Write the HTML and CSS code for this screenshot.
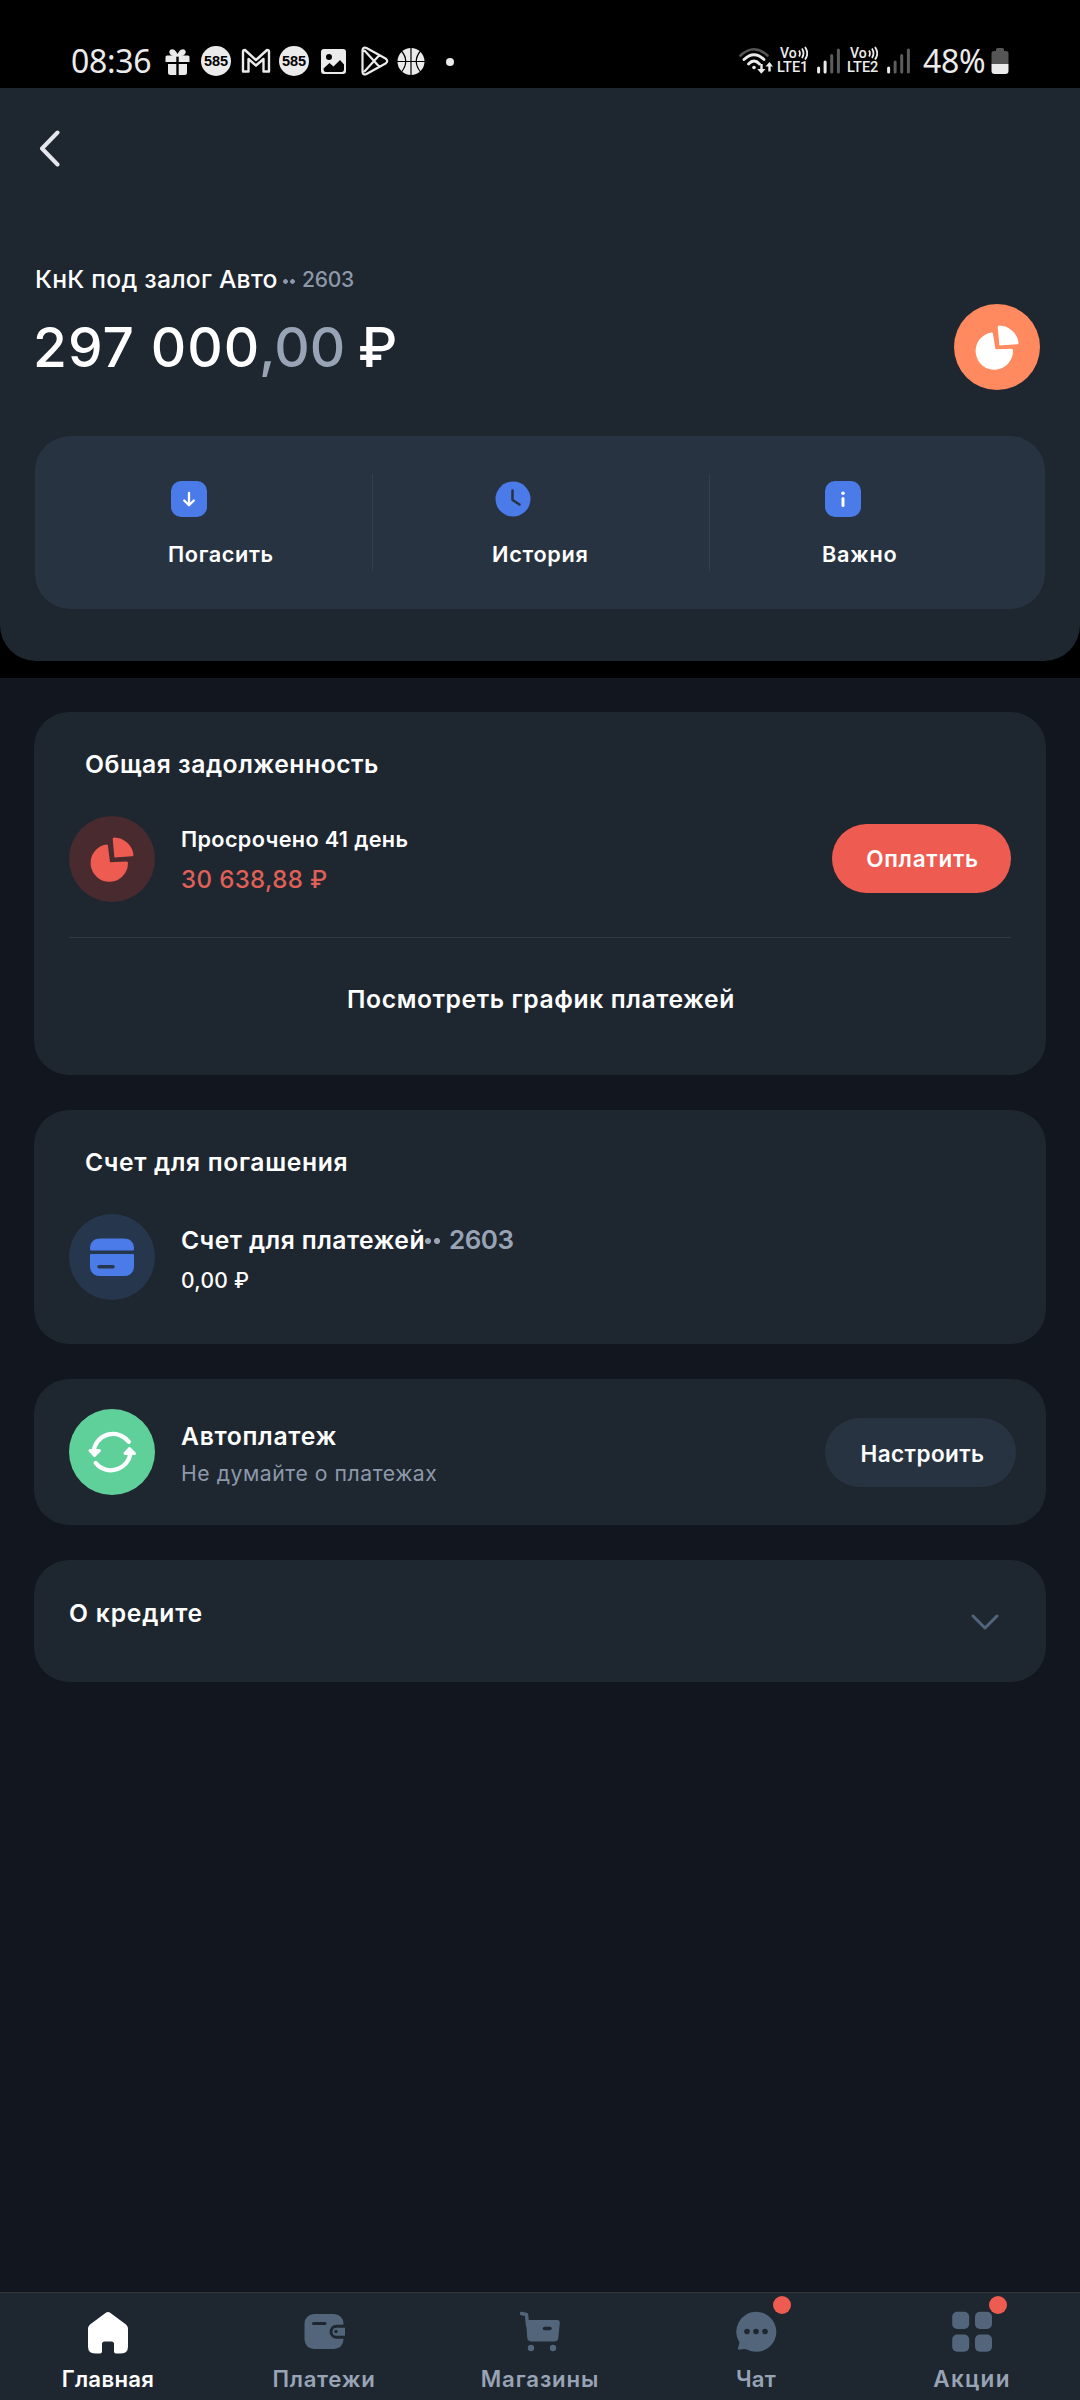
FILE: index.html
```html
<!DOCTYPE html>
<html lang="ru">
<head>
<meta charset="utf-8">
<title>КнК под залог Авто</title>
<link rel="stylesheet" href="styles.css">
</head>
<body>
<div class="status">
  <span class="clock">08:36</span>
  <svg class="s-gift" width="26" height="30" viewBox="0 0 26 30"><path d="M11.300 9.500H2q-1.500 0-1.500 1.500v5h10.800zM13.700 9.500H23q1.500 0 1.500 1.500v5H13.700zM3 18h8.300v11H5.500Q3 29 3 26.500zM13.700 18H22v8.500q0 2.500-2.500 2.500h-5.800z" fill="#ebebeb"/><path d="M12.500 10C7 10 4.500 8 5 5.500 6 3 10 3 12.500 10ZM12.500 10C18 10 20.500 8 20 5.500 19 3 15 3 12.500 10Z" fill="#ebebeb" stroke="#ebebeb" stroke-width="1.500"/></svg>
  <span class="badge585">585</span>
  <svg class="s-mail" width="30" height="30" viewBox="0 0 30 30"><path d="M2 25.500V5.500Q2 4 4 4L15 14 26 4q2 0 2 1.500v20h-5.500V13L15 19.500 7.500 13v12.500z" fill="none" stroke="#ebebeb" stroke-width="2.400" stroke-linejoin="round"/></svg>
  <span class="badge585 second">585</span>
  <svg class="s-img" width="26" height="30" viewBox="0 0 26 30"><path fill-rule="evenodd" d="M3 3h19q3 0 3 3v19q0 3-3 3H3q-3 0-3-3V6q0-3 3-3Zm5 5a3 3 0 1 0 0 6 3 3 0 0 0 0-6ZM2.500 22.500Q2.500 26 5 26h15.500q2.500 0 2.500-3v-4.500l-4-4.500-6.500 6.500-4-3.500Z" fill="#ebebeb"/></svg>
  <svg class="s-play" width="28" height="30" viewBox="0 0 28 30"><path d="M1.500 4v22q.5 3.500 4 2L24.500 17.500q3.500-2.500 0-5L5.500 2q-3.500-1.500-4 2ZM3 4l15.500 17M3 26 18.500 9" fill="none" stroke="#ebebeb" stroke-width="2.200" stroke-linejoin="round"/></svg>
  <svg class="s-ball" width="28" height="30" viewBox="0 0 28 30"><circle cx="14" cy="15.500" r="13.500" fill="#ebebeb"/><path d="M14 2v27M0 15.500h28M4.500 5q8.500 10 0 21M23.500 5q-8.500 10 0 21" fill="none" stroke="#000" stroke-width="1.200"/></svg>
  <i class="s-dot"></i>
  <div class="status-right">
    <svg width="36" height="30" viewBox="0 0 36 30"><g fill="none" stroke-linecap="round"><path d="M1.500 8.500Q15 -4 28.500 8.500" stroke="#555" stroke-width="2.600"/><path d="M5 12.500Q15 3 25 12.500M9.500 17Q15 11 20.500 17" stroke="#ebebeb" stroke-width="2.800"/></g><circle cx="15" cy="20.500" r="1.800" fill="#ebebeb"/><path d="M21.300 17h2.400v5H26.500l-4.200 4.700-4-4.700h3zM29.300 24.500h2.400v-5H34L30.500 15l-4 4.500h2.800z" fill="#ebebeb"/></svg>
    <div class="volte"><span class="vo">Vo<svg width="10" height="14" viewBox="0 0 10 14"><path d="M1 4.500Q3 7.500 1 10.500M4 2.500q3 5 0 9.500M7 1q4.500 6.500 0 12.500" fill="none" stroke="#ebebeb" stroke-width="1.800"/></svg></span><span class="lte">LTE1</span></div>
    <svg class="sig" width="24" height="26" viewBox="0 0 24 26"><path d="M1.600 24v-4M8.100 24V14" stroke="#ebebeb" stroke-width="3" stroke-linecap="round"/><path d="M14.700 24V7.500M21.400 24V2" stroke="#5c5c5c" stroke-width="3" stroke-linecap="round"/></svg>
    <div class="volte two"><span class="vo">Vo<svg width="10" height="14" viewBox="0 0 10 14"><path d="M1 4.500Q3 7.500 1 10.500M4 2.500q3 5 0 9.500M7 1q4.500 6.500 0 12.500" fill="none" stroke="#ebebeb" stroke-width="1.800"/></svg></span><span class="lte">LTE2</span></div>
    <svg class="sig" width="24" height="26" viewBox="0 0 24 26"><path d="M1.600 24v-4" stroke="#ebebeb" stroke-width="3" stroke-linecap="round"/><path d="M8.100 24V14M14.700 24V7.500M21.400 24V2" stroke="#5c5c5c" stroke-width="3" stroke-linecap="round"/></svg>
    <span class="percent">48%</span>
    <svg class="batt" width="18" height="28" viewBox="0 0 18 28"><path d="M3 4h2V2.500Q5 1 6.500 1h5Q13 1 13 2.500V4h2q2.500 0 2.500 2.500V17H.5V6.500Q.5 4 3 4Z" fill="#555"/><path d="M.5 17h17v7q0 3-3 3h-11q-3 0-3-3z" fill="#ebebeb"/></svg>
  </div>
</div>

<div class="header-wrap">
<header class="header">
  <svg class="back" width="24" height="38" viewBox="0 0 24 38"><path d="M20.500 3.500 5 19.500l15.500 16" fill="none" stroke="#e6e6ee" stroke-width="4" stroke-linecap="round" stroke-linejoin="round"/></svg>
  <div class="product">
    <div>
      <div class="name"><span class="name-text">КнК под залог Авто</span><i class="dots"></i><span class="num">2603</span></div>
      <div class="amount"><span class="whole">297 000</span><span class="cents">,00</span><span class="cur">₽</span></div>
    </div>
    <div class="round orange"><svg width="86" height="86" viewBox="0 0 86 86"><path d="M37.500 28.500Q38.700 28.300 38.900 29.500L41.500 45.300 57.500 44.800Q59 44.800 59 46.300A18.700 18.700 0 1 1 37.500 28.500Z" fill="#fff"/><path d="M43.700 23Q43.700 21.400 45.300 21.500A20 20 0 0 1 64.500 38.500Q64.700 40 63.200 40.300L45.400 41.500Z" fill="#fff"/></svg></div>
  </div>
  <div class="actions">
    <div class="action a-pay"><svg width="38" height="38" viewBox="0 0 38 38"><rect x="1" y="1" width="36" height="36" rx="10" fill="#4a7be8"/><path d="M19 13v12M14.200 20.500 19 25.300l4.800-4.800" fill="none" stroke="#fff" stroke-width="2.300" stroke-linecap="round" stroke-linejoin="round"/></svg><span>Погасить</span></div>
    <div class="action a-hist"><svg width="38" height="38" viewBox="0 0 38 38"><circle cx="19" cy="19" r="17.500" fill="#4a7be8"/><path d="M18.500 10.500v9.500l7 4.500" fill="none" stroke="#283341" stroke-width="2.500" stroke-linecap="round" stroke-linejoin="round"/></svg><span>История</span></div>
    <div class="action a-info"><svg width="38" height="38" viewBox="0 0 38 38"><rect x="1" y="1" width="36" height="36" rx="10" fill="#4a7be8"/><circle cx="19" cy="13.300" r="1.800" fill="#fff"/><path d="M19 18.500v7" stroke="#fff" stroke-width="3" stroke-linecap="round"/></svg><span>Важно</span></div>
  </div>
</header>
</div>

<main class="main">
  <section class="card debt">
    <h2 class="debt-title">Общая задолженность</h2>
    <div class="row">
      <div class="round red"><svg width="86" height="86" viewBox="0 0 86 86"><path d="M37.500 28.500Q38.700 28.300 38.900 29.500L41 46.200 57.500 45.500Q59 45.500 59 47A18.700 18.700 0 1 1 37.500 28.500Z" fill="#ee5b50"/><path d="M43.700 23Q43.700 21.400 45.300 21.500A20 20 0 0 1 64.500 38.500Q64.700 40 63.200 40.300L45.400 41.500Z" fill="#ee5b50"/></svg></div>
      <div class="texts"><span class="overdue">Просрочено 41 день</span><span class="sum">30 638,88 ₽</span></div>
      <div class="btn pay"><span>Оплатить</span></div>
    </div>
    <div class="schedule"><span>Посмотреть график платежей</span></div>
  </section>

  <section class="card account">
    <h2>Счет для погашения</h2>
    <div class="row">
      <div class="round blue"><svg width="86" height="86" viewBox="0 0 86 86"><path d="M21.500 36v-1.500Q21.500 25 31 25h24q9.500 0 9.500 9.500V36zM21.500 40.500h43V52q0 9.500-9.500 9.500H31q-9.500 0-9.500-9.500z" fill="#4a7be8" stroke="#4a7be8" stroke-linejoin="round"/><path d="M30 52.800h14" stroke="#26374d" stroke-width="3.400" stroke-linecap="round"/></svg></div>
      <div class="texts"><div class="acc-line"><span class="acc-name">Счет для платежей</span><i class="dots big"></i><span class="acc-num">2603</span></div><span class="acc-sum">0,00 ₽</span></div>
    </div>
  </section>

  <section class="card auto">
    <div class="round green"><svg width="86" height="86" viewBox="0 0 86 86"><g fill="none" stroke="#fff" stroke-width="4.200" stroke-linecap="round"><path d="M59.800 32.800A19.600 19.600 0 0 0 24.500 43"/><path d="M26.700 54A19.600 19.600 0 0 0 61.500 43"/></g><path d="M21 41.500h9.500L25.500 46.500zM56 44.500h9.500L60.500 39.500z" fill="#fff" stroke="#fff" stroke-width="3" stroke-linejoin="round"/></svg></div>
    <div class="texts"><span class="auto-title">Автоплатеж</span><span class="auto-sub">Не думайте о платежах</span></div>
    <div class="btn setup"><span>Настроить</span></div>
  </section>

  <section class="card about">
    <span class="about-title">О кредите</span>
    <svg width="30" height="18" viewBox="0 0 30 18"><path d="M3 3l12 12L27 3" fill="none" stroke="#51647b" stroke-width="3" stroke-linecap="round" stroke-linejoin="round"/></svg>
  </section>
</main>

<nav class="nav">
  <div class="tab on"><svg width="44" height="44" viewBox="0 0 44 44"><path d="M19.500 2Q22 0 24.500 2L40 13.500Q42 15.500 42 18v17.500Q42 42.500 35 42.500h-5Q28 42.500 28 40.500V33q0-2.500-2.500-2.500h-7Q16 30.500 16 33v7.500q0 2-2 2H9Q2 42.500 2 35.500V18q0-2.500 2-4.500z" fill="#fff"/></svg><span class="lbl-home">Главная</span></div>
  <div class="tab"><svg width="44" height="44" viewBox="0 0 44 44"><rect x="2.500" y="3" width="39" height="35" rx="9.500" fill="#52657b"/><path d="M43 15.200h-8.500a5.500 5.500 0 0 0 0 11H43" fill="#52657b" stroke="#1e262f" stroke-width="3"/><circle cx="34" cy="20.500" r="1.700" fill="#1e262f"/><path d="M11.500 12.500h11.500" stroke="#1e262f" stroke-width="3" stroke-linecap="round"/></svg><span class="lbl-pay">Платежи</span></div>
  <div class="tab"><svg width="44" height="44" viewBox="0 0 44 44"><path d="M3.500 2.500 8.500 3.500 9.500 14" fill="none" stroke="#52657b" stroke-width="3.400" stroke-linecap="round" stroke-linejoin="round"/><path d="M8 9h31q3 0 2.800 3l-1.500 15q-.4 3.500-4 3.500H13.500q-4 0-4.300-4z" fill="#52657b"/><circle cx="13" cy="37" r="3.200" fill="#52657b"/><circle cx="35" cy="37" r="3.200" fill="#52657b"/><path d="M26.500 17.500h5.500" stroke="#1e262f" stroke-width="3.400" stroke-linecap="round"/></svg><span class="lbl-shop">Магазины</span></div>
  <div class="tab"><i class="note"></i><svg width="44" height="44" viewBox="0 0 44 44"><path d="M22 .800A20 20 0 1 1 13 38.500Q11 37.500 5.500 38.800 3.500 39 4 37L5.500 31.500A20 20 0 0 1 22 .800Z" fill="#52657b"/><g fill="#1e262f"><circle cx="13" cy="20.500" r="2.800"/><circle cx="22" cy="20.500" r="2.800"/><circle cx="31" cy="20.500" r="2.800"/></g></svg><span class="lbl-chat">Чат</span></div>
  <div class="tab"><i class="note"></i><svg width="44" height="44" viewBox="0 0 44 44"><g fill="#52657b"><rect x="2.200" y=".8" width="17" height="17.200" rx="5"/><rect x="25" y=".8" width="17" height="17.200" rx="5"/><rect x="2.200" y="23.500" width="17" height="17.200" rx="5"/><rect x="25" y="23.500" width="17" height="17.200" rx="5"/></g></svg><span class="lbl-promo">Акции</span></div>
</nav>
</body>
</html>
```
FILE: styles.css
```css
* { box-sizing: border-box; }
body { margin: 0; width: 1080px; height: 2400px; overflow: hidden; background: #12161f; color: #fff; font-family: Inter, "Noto Sans", sans-serif; font-weight: 500; display: flex; flex-direction: column; }
svg, i { display: block; flex: none; }
span { white-space: nowrap; }

/* System status bar */
.status { height: 88px; background: #000; padding: 34px 71px 0 70px; display: flex; align-items: flex-start; color: #ebebeb; font-family: "Noto Sans", sans-serif; flex: none; }
.status > svg, .badge585 { margin-top: 12px; }
.clock { font-size: 32px; font-weight: 400; line-height: 53px; width: 82px; letter-spacing: -.3px; margin-left: 1px; }
.s-gift { margin-left: 12px; }
.badge585 { width: 30px; height: 30px; border-radius: 15px; background: #ebebeb; color: #000; font: 700 14.500px/31px "Liberation Sans", sans-serif; text-align: center; margin-left: 10px; }
.s-mail { margin-left: 10px; }
.badge585.second { margin-left: 8px; }
.s-img { margin-left: 12px; }
.s-play { margin-left: 14px; }
.s-ball { margin-left: 8px; }
.s-dot { width: 8px; height: 8px; border-radius: 4px; background: #ebebeb; margin: 24px 0 0 21px; }
.status-right { margin-left: auto; display: flex; padding-top: 13px; }
.volte { width: 34px; margin-left: 2px; font: 500 14px/12px Roboto, sans-serif; display: flex; flex-direction: column; align-items: flex-start; gap: 3px; }
.vo { display: flex; height: 12px; padding-left: 3px; }
.vo svg { margin: -1px 0 0 1px; }
.lte { font-size: 14.500px; line-height: 12px; }
.sig { margin: 1px 0 0 6px; }
.volte.two { margin-left: 6px; }
.percent { font-size: 32px; font-weight: 400; line-height: 53px; margin: -13px 0 0 12px; width: 64px; letter-spacing: -.3px; }
.batt { margin-left: 4px; }

/* Product header */
.header-wrap { background: #000; padding-bottom: 17px; flex: none; }
.header { height: 573px; background: #1e262f; border-radius: 0 0 36px 36px; padding: 41px 35px 0; }
.back { margin-left: 2px; }
.product { display: flex; justify-content: space-between; padding: 96px 5px 0 0; }
.name { display: flex; height: 32px; line-height: 32px; font-size: 24.700px; }
.name-text { width: 248px; letter-spacing: .230px; }
.num { font-size: 21px; line-height: 34px; color: #8d99aa; margin-left: 7px; letter-spacing: -.2px; }
.dots { width: 12px; height: 5px; margin-top: 16px; background: radial-gradient(circle at 2.500px 2.500px, #8d99aa 2px, transparent 2.600px) 0 0 / 7px 5px; }
.dots.big { width: 16px; height: 6px; margin-top: 14px; background: radial-gradient(circle at 3px 3px, #98a4b5 2.700px, transparent 3.300px) 0 0 / 9px 6px; }
.amount { display: flex; font-size: 55px; line-height: 64px; margin-top: 20px; }
.whole { width: 226px; margin-left: -2px; letter-spacing: 1.050px; }
.cents { width: 99px; color: #98a4b5; }
.round { width: 86px; height: 86px; border-radius: 50%; flex: none; }
.orange { background: #ff8a5f; margin-top: 41px; }
.actions { height: 173px; margin-top: 46px; border-radius: 35px; background: #283341; display: grid; grid-template-columns: 337px 337px 336px; padding: 38px 0; }
.action { display: flex; flex-direction: column; gap: 22px; padding-top: 6px; font-size: 21.700px; line-height: 28px; font-weight: 600; }
.action + .action { border-left: 1px solid #313f4e; }
.a-pay { padding-left: 133px; letter-spacing: .630px; }
.a-hist { padding-left: 119px; letter-spacing: .7px; }
.a-info { padding-left: 112px; letter-spacing: .8px; }
.action svg { margin-left: 2px; }

/* Cards */
.main { border-top: 1px solid #151a22; padding: 33px 34px 0; flex: 1; }
.card { background: #1e262f; border-radius: 35px; padding: 0 35px; margin-bottom: 35px; }
h2 { margin: 0; font-weight: 600; font-size: 24.700px; line-height: 32px; padding: 36px 0 0 16px; letter-spacing: .630px; }
.debt-title { letter-spacing: .520px; }
.row { display: flex; }
.texts { display: flex; flex-direction: column; padding-left: 26px; }
.btn { height: 69px; border-radius: 35px; margin-left: auto; font-weight: 600; font-size: 22.500px; line-height: 70px; text-align: center; }
.debt { height: 363px; }
.debt .row { padding: 36px 0 34px; height: 158px; border-bottom: 1px solid #2d3a45; }
.red { background: #482a2f; }
.overdue { font-size: 21.700px; line-height: 28px; margin-top: 9px; font-weight: 600; letter-spacing: .330px; }
.sum { font-size: 24px; line-height: 32px; color: #e06058; margin-top: 11px; letter-spacing: .4px; }
.pay { width: 179px; background: #ee5b50; margin-top: 8px; padding-left: 2px; letter-spacing: .720px; }
.schedule { text-align: center; font-size: 24.700px; font-weight: 600; line-height: 32px; padding: 45px 0 0 2px; letter-spacing: .580px; }
.account { height: 234px; }
.account .row { padding-top: 36px; }
.blue { background: #26374d; }
.acc-line { display: flex; font-size: 24.700px; line-height: 32px; margin-top: 10px; font-weight: 600; }
.acc-name { width: 244px; letter-spacing: .430px; }
.acc-num { font-size: 26px; color: #98a4b5; margin-left: 8px; letter-spacing: -.490px; }
.acc-sum { font-size: 21px; line-height: 28px; margin-top: 11px; letter-spacing: .3px; }
.auto { height: 146px; display: flex; padding: 30px 30px 0 35px; }
.green { background: #60d09b; }
.auto-title { font-size: 24.700px; line-height: 32px; margin-top: 11px; font-weight: 600; letter-spacing: .670px; }
.auto-sub { font-size: 21.200px; line-height: 28px; margin-top: 7px; color: #8d99aa; font-weight: 400; letter-spacing: .540px; }
.setup { width: 191px; background: #283341; margin-top: 9px; padding-left: 4px; line-height: 71px; letter-spacing: .460px; }
.about { height: 122px; display: flex; justify-content: space-between; padding: 37px 46px 0 35px; margin: 0; }
.about-title { font-size: 24.700px; line-height: 32px; font-weight: 600; letter-spacing: .8px; }
.about svg { margin-top: 16px; }

/* Bottom navigation */
.nav { height: 108px; background: #1e262f; border-top: 1px solid #34363a; display: grid; grid-template-columns: repeat(5, 216px); flex: none; color: #98a4b5; }
.tab { position: relative; display: flex; flex-direction: column; align-items: center; padding-top: 18px; font-size: 22.200px; font-weight: 600; line-height: 28px; gap: 10px; }
.on { color: #fff; }
.lbl-home { letter-spacing: .3px; }
.lbl-pay { letter-spacing: .7px; }
.lbl-shop { letter-spacing: .9px; }
.lbl-chat { letter-spacing: .2px; }
.lbl-promo { font-size: 22.500px; letter-spacing: 1.300px; }
.note { position: absolute; left: 125px; top: 3px; width: 18px; height: 18px; border-radius: 9px; background: #ee5b50; }
```
